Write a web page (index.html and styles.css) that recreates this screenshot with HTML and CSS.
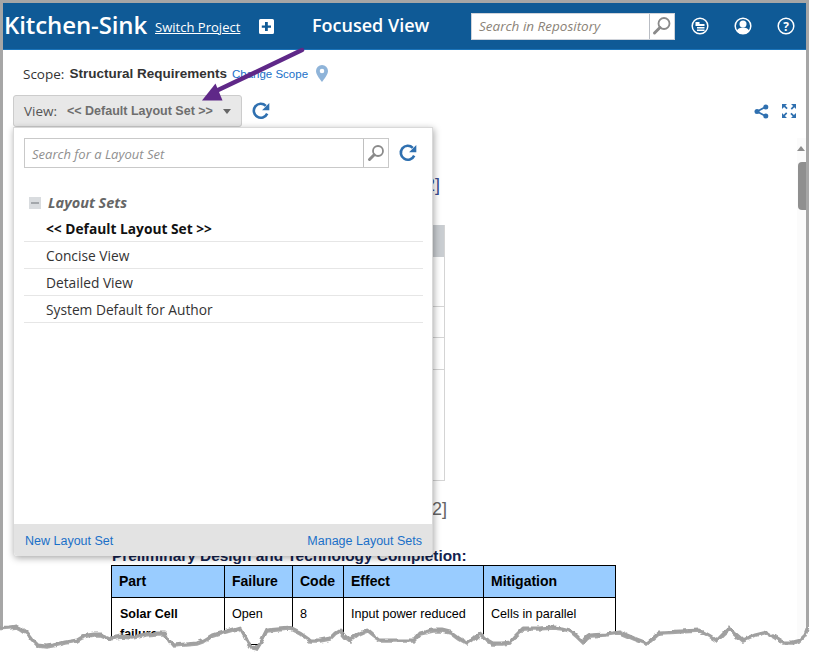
FILE: index.html
```html
<!DOCTYPE html>
<html lang="en">
<head>
<meta charset="utf-8">
<title>Kitchen-Sink Focused View</title>
<link rel="stylesheet" href="styles.css">
</head>
<body>
<div class="frame">
  <header class="topbar">
    <span class="project">Kitchen-Sink</span>
    <a class="switch">Switch Project</a>
    <svg class="plus" width="15" height="15" viewBox="0 0 15 15"><path d="M1.500 0h12A1.500 1.500 0 0 1 15 1.500v12a1.500 1.500 0 0 1-1.500 1.500h-12A1.500 1.500 0 0 1 0 13.500v-12A1.500 1.500 0 0 1 1.500 0zM6 3v3.500H2.800v2.300H6V12h2.800V8.800H12V6.500H8.800V3z" fill="#fff" fill-rule="evenodd"/></svg>
    <span class="focused">Focused View</span>
    <div class="repo-search">
      <span class="repo-input">Search in Repository</span>
      <span class="repo-btn">
        <svg width="22" height="22" viewBox="0 0 22 22"><circle cx="13" cy="8.500" r="5.500" fill="none" stroke="#8a8a8a" stroke-width="1.800"/><path d="M9 12.500 3.500 18" stroke="#8a8a8a" stroke-width="3" stroke-linecap="round"/></svg>
      </span>
    </div>
    <div class="top-icons">
      <svg width="18" height="18" viewBox="0 0 18 18"><circle cx="9" cy="9" r="7.800" fill="none" stroke="#fff" stroke-width="1.500"/><path d="M4.500 5h4v2h5v2h-9zM6 10h7.500v1.500H6zM6 12.500h7.500V14H6z" fill="#fff"/></svg>
      <svg width="18" height="18" viewBox="0 0 18 18"><circle cx="9" cy="9" r="7.800" fill="none" stroke="#fff" stroke-width="1.500"/><circle cx="9" cy="7" r="3.500" fill="#fff"/><path d="M2.800 14c1-2.600 3.500-3.500 6.200-3.500s5.200.9 6.200 3.500a7.800 7.800 0 0 1-12.400 0z" fill="#fff"/></svg>
      <svg width="18" height="18" viewBox="0 0 18 18"><circle cx="9" cy="9" r="7.800" fill="none" stroke="#fff" stroke-width="1.500"/><text x="9" y="13.500" class="help-mark" text-anchor="middle">?</text></svg>
    </div>
  </header>

  <div class="scope-row">
    <span class="scope-label">Scope:</span>
    <strong class="scope-name">Structural Requirements</strong>
    <a class="scope-link">Change Scope</a>
    <svg width="12" height="17" viewBox="0 0 12 17"><path d="M6 0a6 6 0 0 1 6 6c0 3.500-3.500 7.500-6 11C3.500 13.500 0 9.500 0 6a6 6 0 0 1 6-6zm0 3.700a2.300 2.300 0 1 0 0 4.600 2.300 2.300 0 0 0 0-4.600z" fill="#8fb4d9" fill-rule="evenodd"/></svg>
  </div>

  <div class="view-row">
    <button class="view-btn"><span class="view-label">View:</span><span class="view-name">&lt;&lt; Default Layout Set &gt;&gt;</span><span class="caret"></span></button>
    <svg class="refresh" width="20" height="20" viewBox="0 0 20 20"><path d="M16.200 12.600A7 7 0 1 1 14.800 4.800" fill="none" stroke="#2f70b0" stroke-width="2.600"/><path d="M18.300 2v7.200h-7.200z" fill="#2f70b0"/></svg>
    <div class="view-actions">
      <svg width="15" height="15" viewBox="0 0 15 15"><path d="M11.500 3 3 7.500l8.500 4.500" fill="none" stroke="#2f70b0" stroke-width="1.700"/><circle cx="11.800" cy="3" r="2.500" fill="#2f70b0"/><circle cx="3" cy="7.500" r="2.500" fill="#2f70b0"/><circle cx="11.800" cy="12" r="2.500" fill="#2f70b0"/></svg>
      <svg width="16" height="16" viewBox="0 0 16 16"><path d="M1 1h5L4.300 2.700l2.400 2.400-1.200 1.200-2.400-2.400L1 6zM15 1v5l-1.700-1.700-2.400 2.400-1.200-1.200 2.400-2.400L10 1zM1 15v-5l1.700 1.700 2.400-2.400 1.200 1.200-2.400 2.400L6 15zM15 15h-5l1.700-1.700-2.400-2.400 1.200-1.200 2.400 2.400L15 10z" fill="#2f70b0"/></svg>
    </div>
  </div>

  <main class="doc">
    <h2 class="doc-ref doc-ref-blue">[2]</h2>
    <div class="req-table">
      <div class="req-head"></div>
      <div class="req-row req-row-a"></div>
      <div class="req-row req-row-b"></div>
      <div class="req-row req-row-c"></div>
      <div class="req-row req-row-d"></div>
    </div>
    <h2 class="doc-ref doc-ref-gray">[2]</h2>
    <h3 class="doc-sub">Preliminary Design and Technology Completion:</h3>
    <table class="fail-table">
      <colgroup><col class="c1"><col class="c2"><col class="c3"><col class="c4"><col class="c5"></colgroup>
      <tr class="fail-head"><th>Part</th><th>Failure</th><th>Code</th><th>Effect</th><th>Mitigation</th></tr>
      <tr class="fail-row"><td class="strong">Solar Cell failure</td><td>Open</td><td>8</td><td>Input power reduced</td><td>Cells in parallel</td></tr>
    </table>
    <div class="scrollbar">
      <span class="scroll-up"></span>
      <span class="scroll-thumb"></span>
    </div>
  </main>

  <section class="popup">
    <div class="popup-body">
      <div class="popup-search">
        <div class="ls-search">
          <span class="ls-input">Search for a Layout Set</span>
          <span class="ls-btn"><svg width="20" height="20" viewBox="0 0 20 20"><circle cx="12" cy="8" r="5" fill="none" stroke="#8a8a8a" stroke-width="1.800"/><path d="M8.200 11.800 3.500 16.500" stroke="#8a8a8a" stroke-width="3" stroke-linecap="round"/></svg></span>
        </div>
        <svg class="refresh" width="20" height="20" viewBox="0 0 20 20"><path d="M16.200 12.600A7 7 0 1 1 14.800 4.800" fill="none" stroke="#2f70b0" stroke-width="2.600"/><path d="M18.300 2v7.200h-7.200z" fill="#2f70b0"/></svg>
      </div>
      <div class="ls-group"><span class="collapse"></span><span class="ls-title">Layout Sets</span></div>
      <ul class="ls-list">
        <li class="ls-item ls-active">&lt;&lt; Default Layout Set &gt;&gt;</li>
        <li class="ls-item">Concise View</li>
        <li class="ls-item">Detailed View</li>
        <li class="ls-item">System Default for Author</li>
      </ul>
    </div>
    <footer class="popup-foot"><a>New Layout Set</a><a>Manage Layout Sets</a></footer>
  </section>
</div>

<svg class="overlay" width="815" height="663" viewBox="0 0 815 663">
  <defs>
    <filter id="rough" filterUnits="userSpaceOnUse" x="-10" y="600" width="835" height="63">
      <feTurbulence type="fractalNoise" baseFrequency="0.120" numOctaves="2" seed="4" result="n"/>
      <feDisplacementMap in="SourceGraphic" in2="n" scale="5" xChannelSelector="R" yChannelSelector="G"/>
    </filter>
  </defs>
  <path d="M302 50 216 91" stroke="#5f2888" stroke-width="4.500" stroke-linecap="round" fill="none"/>
  <path d="M202 100.500h20.500l-7-17z" fill="#5f2888"/>
  <g filter="url(#rough)">
  <path class="tear-fill" d="M-5 628L9 627 17 626 21 628 27 632 33 640 38 645 46 646 53 645 65 642 77 640 82 637 87 635 94 634 100 634 110 638 122 636 133 637 145 634 157 633 165 633 169 640 173 645 185 644 197 643 205 640 213 635 226 631 240 627 244 634 248 642 252 647 257 648 262 640 267 630 278 629 290 628 300 633 310 640 320 640 330 638 335 633 340 630 345 636 350 640 358 634 367 630 373 635 380 640 400 640 414 640 420 633 433 630 442 630 450 632 458 638 467 643 474 638 480 633 486 639 493 643 502 643 510 642 516 635 523 628 538 628 553 627 562 628 570 630 577 636 583 642 587 637 590 635 605 634 620 632 634 638 647 643 653 638 660 632 680 631 700 630 709 635 717 640 723 634 730 628 736 634 743 640 755 635 767 632 775 637 783 642 792 642 800 640 805 635 808 627L820 627V670H-5z"/>
  <path class="tear-shadow" d="M-5 629.500L9 628.500 17 627.500 21 629.500 27 633.500 33 641.500 38 646.500 46 647.500 53 646.500 65 643.500 77 641.500 82 638.500 87 636.500 94 635.500 100 635.500 110 639.500 122 637.500 133 638.500 145 635.500 157 634.500 165 634.500 169 641.500 173 646.500 185 645.500 197 644.500 205 641.500 213 636.500 226 632.500 240 628.500 244 635.500 248 643.500 252 648.500 257 649.500 262 641.500 267 631.500 278 630.500 290 629.500 300 634.500 310 641.500 320 641.500 330 639.500 335 634.500 340 631.500 345 637.500 350 641.500 358 635.500 367 631.500 373 636.500 380 641.500 400 641.500 414 641.500 420 634.500 433 631.500 442 631.500 450 633.500 458 639.500 467 644.500 474 639.500 480 634.500 486 640.500 493 644.500 502 644.500 510 643.500 516 636.500 523 629.500 538 629.500 553 628.500 562 629.500 570 631.500 577 637.500 583 643.500 587 638.500 590 636.500 605 635.500 620 633.500 634 639.500 647 644.500 653 639.500 660 633.500 680 632.500 700 631.500 709 636.500 717 641.500 723 635.500 730 629.500 736 635.500 743 641.500 755 636.500 767 633.500 775 638.500 783 643.500 792 643.500 800 641.500 805 636.500 808 628.500"/>
  <path class="tear-line" d="M-5 628L9 627 17 626 21 628 27 632 33 640 38 645 46 646 53 645 65 642 77 640 82 637 87 635 94 634 100 634 110 638 122 636 133 637 145 634 157 633 165 633 169 640 173 645 185 644 197 643 205 640 213 635 226 631 240 627 244 634 248 642 252 647 257 648 262 640 267 630 278 629 290 628 300 633 310 640 320 640 330 638 335 633 340 630 345 636 350 640 358 634 367 630 373 635 380 640 400 640 414 640 420 633 433 630 442 630 450 632 458 638 467 643 474 638 480 633 486 639 493 643 502 643 510 642 516 635 523 628 538 628 553 627 562 628 570 630 577 636 583 642 587 637 590 635 605 634 620 632 634 638 647 643 653 638 660 632 680 631 700 630 709 635 717 640 723 634 730 628 736 634 743 640 755 635 767 632 775 637 783 642 792 642 800 640 805 635 808 627"/>
  </g>
</svg>
</body>
</html>
```

FILE: styles.css
```css
* { box-sizing: border-box; }
html, body { margin: 0; padding: 0; }
body { width: 815px; height: 663px; overflow: hidden; background: #fff; font-family: "Open Sans", sans-serif; color: #333; position: relative; }

.frame { position: relative; width: 809px; height: 650px; border: 3px solid #a6a6a6; border-bottom: 0; background: #fff; overflow: hidden; }

.topbar { height: 47px; background: #0f5a96; border-bottom: 1px solid #1b74ba; display: flex; align-items: center; color: #fff; padding-left: 1px; }
.project { font-size: 24px; font-weight: 600; line-height: 44px; width: 151px; letter-spacing: -.1px; margin-top: -2px; }
.switch { font-size: 13px; text-decoration: underline; width: 104px; padding-top: 1px; letter-spacing: .02px; }
.plus { flex: none; margin-top: 1px; }
.focused { font-size: 18px; font-weight: 600; margin-left: 38px; width: 159px; margin-top: -2px; white-space: nowrap; }
.repo-search { display: flex; width: 204px; height: 27px; background: #fff; border: 1px solid #cfd3da; margin-top: 0; }
.repo-input { flex: 1; font-size: 13.500px; font-style: italic; color: #8b8378; padding-left: 7px; line-height: 25px; white-space: nowrap; }
.repo-btn { width: 25px; border-left: 1px solid #b9bdc4; display: flex; align-items: center; justify-content: center; }
.top-icons { display: flex; gap: 25px; margin-left: 16px; margin-top: -1px; }
.help-mark { font: 700 12px "Open Sans", sans-serif; fill: #fff; }

.scope-row { height: 45px; display: flex; align-items: center; padding-left: 20px; font-size: 13.500px; padding-top: 2px; }
.scope-label { color: #333; }
.scope-name { font-family: "Liberation Sans", sans-serif; font-size: 13.500px; font-weight: 700; color: #333; margin-left: 5px; }
.scope-link { font-family: "Liberation Sans", sans-serif; font-size: 11.500px; color: #1a70c8; margin-left: 5px; margin-right: 8px; }

.view-row { height: 32px; display: flex; align-items: center; padding-left: 10px; }
.view-btn { width: 229px; height: 32px; background: #e8e8e8; border: 1px solid #ccc; border-radius: 3px; display: flex; align-items: center; padding: 0 10px; font-family: inherit; }
.view-label { font-size: 13.500px; color: #555; width: 43px; text-align: left; }
.view-name { font-family: "Liberation Sans", sans-serif; font-size: 12.500px; font-weight: 700; color: #6e6e6e; white-space: nowrap; width: 148px; text-align: left; }
.caret { width: 0; height: 0; border-left: 4.500px solid transparent; border-right: 4.500px solid transparent; border-top: 5px solid #666; margin-left: 8px; }
.refresh { flex: none; margin-left: 9px; }
.view-actions { margin-left: auto; margin-right: 9px; display: flex; align-items: center; gap: 12px; }

.doc { position: relative; height: 523px; overflow: hidden; padding-left: 108px; }
.doc-ref { margin: 0; font-family: "Liberation Sans", sans-serif; font-weight: 400; font-size: 18px; line-height: 24px; text-align: right; }
.doc-ref-blue { margin-top: 46px; width: 329px; color: #3a4c8e; }
.doc-ref-gray { margin-top: 16px; width: 336px; color: #666; }
.req-table { margin-top: 28px; width: 334px; height: 256px; border: 1px solid #d4d4d4; border-top: 0; }
.req-head { height: 32px; background: #c9cdd1; }
.req-row { border-bottom: 1px solid #d4d4d4; }
.req-row-a { height: 50px; }
.req-row-b { height: 31px; }
.req-row-c { height: 32px; }
.req-row-d { height: 110px; border-bottom: 0; }
.doc-sub { margin: 26px 0 0 1px; font-family: "Liberation Sans", sans-serif; font-size: 15.400px; line-height: 18px; font-weight: 700; color: #14234f; white-space: nowrap; }

.fail-table { border-collapse: collapse; table-layout: fixed; width: 504px; font-family: "Liberation Sans", sans-serif; font-size: 12.600px; color: #000; }
.c1 { width: 113px; } .c2 { width: 68px; } .c3 { width: 51px; } .c4 { width: 140px; } .c5 { width: 132px; }
.fail-table th, .fail-table td { border: 1px solid #000; padding: 0 7px; text-align: left; }
.fail-head th { height: 32px; background: #99ccff; font-size: 14px; font-weight: 700; padding-bottom: 2px; }
.fail-row td { height: 34px; vertical-align: top; line-height: 20px; padding-top: 6px; }
.fail-row .strong { font-size: 12.500px; font-weight: 700; padding-left: 8px; }

.scrollbar { position: absolute; top: 11px; right: 0; bottom: 0; width: 9px; background: #fbfbfb; }
.scroll-up { position: absolute; top: 8px; left: 0; width: 0; height: 0; border-left: 4.500px solid transparent; border-right: 4.500px solid transparent; border-bottom: 5px solid #8d8d8d; }
.scroll-thumb { position: absolute; top: 24px; left: 1px; width: 8px; height: 48px; border-radius: 4px 0 0 4px; background: #8f8f8f; }

.popup { position: absolute; left: 10px; top: 124px; width: 420px; height: 429px; background: #fff; border: 1px solid #d9d9d9; border-bottom: 0; border-radius: 0 0 4px 4px; box-shadow: 1px 2px 7px rgba(0,0,0,.35); display: flex; flex-direction: column; }
.popup-body { flex: 1; padding: 10px 9px 0 10px; }
.popup-search { display: flex; align-items: center; }
.ls-search { width: 365px; height: 30px; border: 1px solid #c9c9c9; display: flex; }
.ls-input { flex: 1; font-family: "Open Sans", sans-serif; font-size: 13px; font-style: italic; color: #8f8f8f; padding-left: 7px; line-height: 30px; white-space: nowrap; }
.ls-btn { width: 25px; border-left: 1px solid #c0c0c0; display: flex; align-items: center; justify-content: center; }
.popup-search .refresh { margin-left: 9px; }
.ls-group { display: flex; align-items: center; margin-top: 22px; height: 25px; padding-left: 5px; margin-bottom: 1px; }
.collapse { width: 12px; height: 12px; background: #d9dcdf; position: relative; margin-right: 7px; }
.collapse::after { content: ""; position: absolute; left: 2px; right: 2px; top: 5px; height: 2px; background: #a3a7ab; }
.ls-title { font-size: 14.500px; font-weight: 700; font-style: italic; color: #666; }
.ls-list { list-style: none; margin: 0; padding: 0; }
.ls-item { height: 27px; line-height: 27px; padding-left: 22px; font-size: 13.750px; color: #333; border-bottom: 1px solid #e6e6e6; }
.ls-active { height: 26px; line-height: 26px; font-weight: 700; color: #111; }
.popup-foot { height: 32px; flex: none; background: #e3e3e3; display: flex; justify-content: space-between; align-items: center; padding: 1px 10px 0 11px; font-family: "Liberation Sans", sans-serif; font-size: 12.500px; color: #1a70c8; border-radius: 0 0 4px 4px; }

.overlay { position: absolute; left: 0; top: 0; pointer-events: none; }
.tear-fill { fill: #fff; }
.tear-line { fill: none; stroke: #a0a0a0; stroke-width: 3; stroke-linejoin: round; }
.tear-shadow { fill: none; stroke: #a8a8a8; stroke-width: 2.500; }
```
